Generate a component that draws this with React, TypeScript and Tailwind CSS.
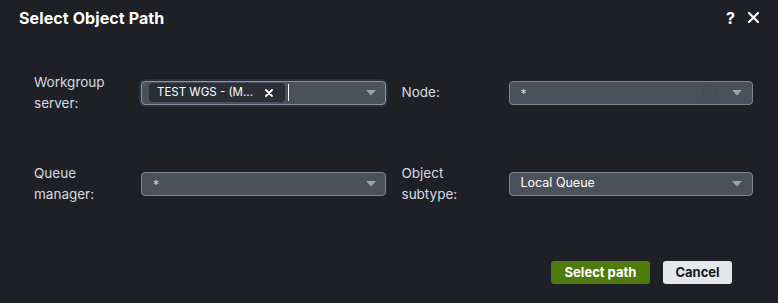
import React from "react";

const Chevron = () => (
  <svg width="10" height="6" viewBox="0 0 10 6" className="shrink-0">
    <path d="M0 0 L10 0 L5 5.5 Z" fill="#9ca3af" />
  </svg>
);

const Label = ({ children }: { children: React.ReactNode }) => (
  <div className="w-[107px] shrink-0 text-[13.5px] leading-[21px] text-[#d7dae0]">{children}</div>
);

export default function App() {
  return (
    <div
      className="w-[778px] h-[303px] bg-[#1f2026] flex flex-col overflow-hidden"
      style={{ fontFamily: "Inter, 'Noto Sans', sans-serif" }}
    >
      <div className="h-[35px] flex items-center pl-[19px] pr-[19px]">
        <div className="text-[16px] font-bold text-white tracking-[0.1px]">Select Object Path</div>
        <div className="ml-auto flex items-center gap-[13px] text-white">
          <span className="text-[16px] font-bold leading-none">?</span>
          <svg width="11" height="11" viewBox="0 0 11 11">
            <path d="M1 1 L10 10 M10 1 L1 10" stroke="white" strokeWidth="2.2" strokeLinecap="round" />
          </svg>
        </div>
      </div>

      <div className="pl-[34px] pr-[25px] pt-[35px] grid grid-cols-2 gap-x-[16px] gap-y-[46px]">
        {/* Row 1 col 1 */}
        <div className="flex items-center h-[45px]">
          <Label>
            Workgroup
            <br />
            server:
          </Label>
          <div className="flex-1 h-[24px] rounded-[4px] border border-[#8b93a1] bg-[#4b515b] flex items-center pl-[7px] pr-[9px] shadow-[0_0_0_2px_#283040]">
            <div className="h-[19px] w-[136px] rounded-[4px] bg-[#2b2e36] flex items-center pl-[8px] pr-[12px] text-[11.5px] text-white">
              <span>TEST WGS - (M...</span>
              <svg width="8" height="8" viewBox="0 0 8 8" className="ml-auto">
                <path d="M1 1 L7 7 M7 1 L1 7" stroke="white" strokeWidth="1.8" strokeLinecap="round" />
              </svg>
            </div>
            <div className="ml-[3px] w-[1px] h-[17px] bg-white" />
            <div className="flex-1" />
            <Chevron />
          </div>
        </div>
        {/* Row 1 col 2 */}
        <div className="flex items-center h-[45px]">
          <Label>Node:</Label>
          <div className="flex-1 h-[24px] rounded-[4px] border border-[#7d8593] bg-[#4b515b] flex items-center pl-[11px] pr-[10px]">
            <span className="text-[12px] text-[#d7dae0] leading-none mt-[2px]">*</span>
            <div className="flex-1" />
            <div className="w-[15px] h-[15px] rounded-full border-[1.5px] border-[#444952] mr-[15px]" />
            <Chevron />
          </div>
        </div>
        {/* Row 2 col 1 */}
        <div className="flex items-center h-[45px]">
          <Label>
            Queue
            <br />
            manager:
          </Label>
          <div className="flex-1 h-[24px] rounded-[4px] border border-[#7d8593] bg-[#4b515b] flex items-center pl-[11px] pr-[9px]">
            <span className="text-[12px] text-[#d7dae0] leading-none mt-[2px]">*</span>
            <div className="flex-1" />
            <Chevron />
          </div>
        </div>
        {/* Row 2 col 2 */}
        <div className="flex items-center h-[45px]">
          <Label>
            Object
            <br />
            subtype:
          </Label>
          <div className="flex-1 h-[24px] rounded-[4px] border border-[#7d8593] bg-[#4b515b] flex items-center pl-[11px] pr-[10px]">
            <span className="text-[12.5px] text-white">Local Queue</span>
            <div className="flex-1" />
            <Chevron />
          </div>
        </div>
      </div>

      <div className="mt-auto mb-[19px] pr-[46px] flex justify-end gap-[13px]">
        <button className="h-[23px] w-[99px] rounded-[3px] bg-[#4f7a0e] text-white text-[13px] font-bold">
          Select path
        </button>
        <button className="h-[23px] w-[69px] rounded-[3px] bg-[#e5e7eb] text-[#111827] text-[13px] font-bold">
          Cancel
        </button>
      </div>
    </div>
  );
}
